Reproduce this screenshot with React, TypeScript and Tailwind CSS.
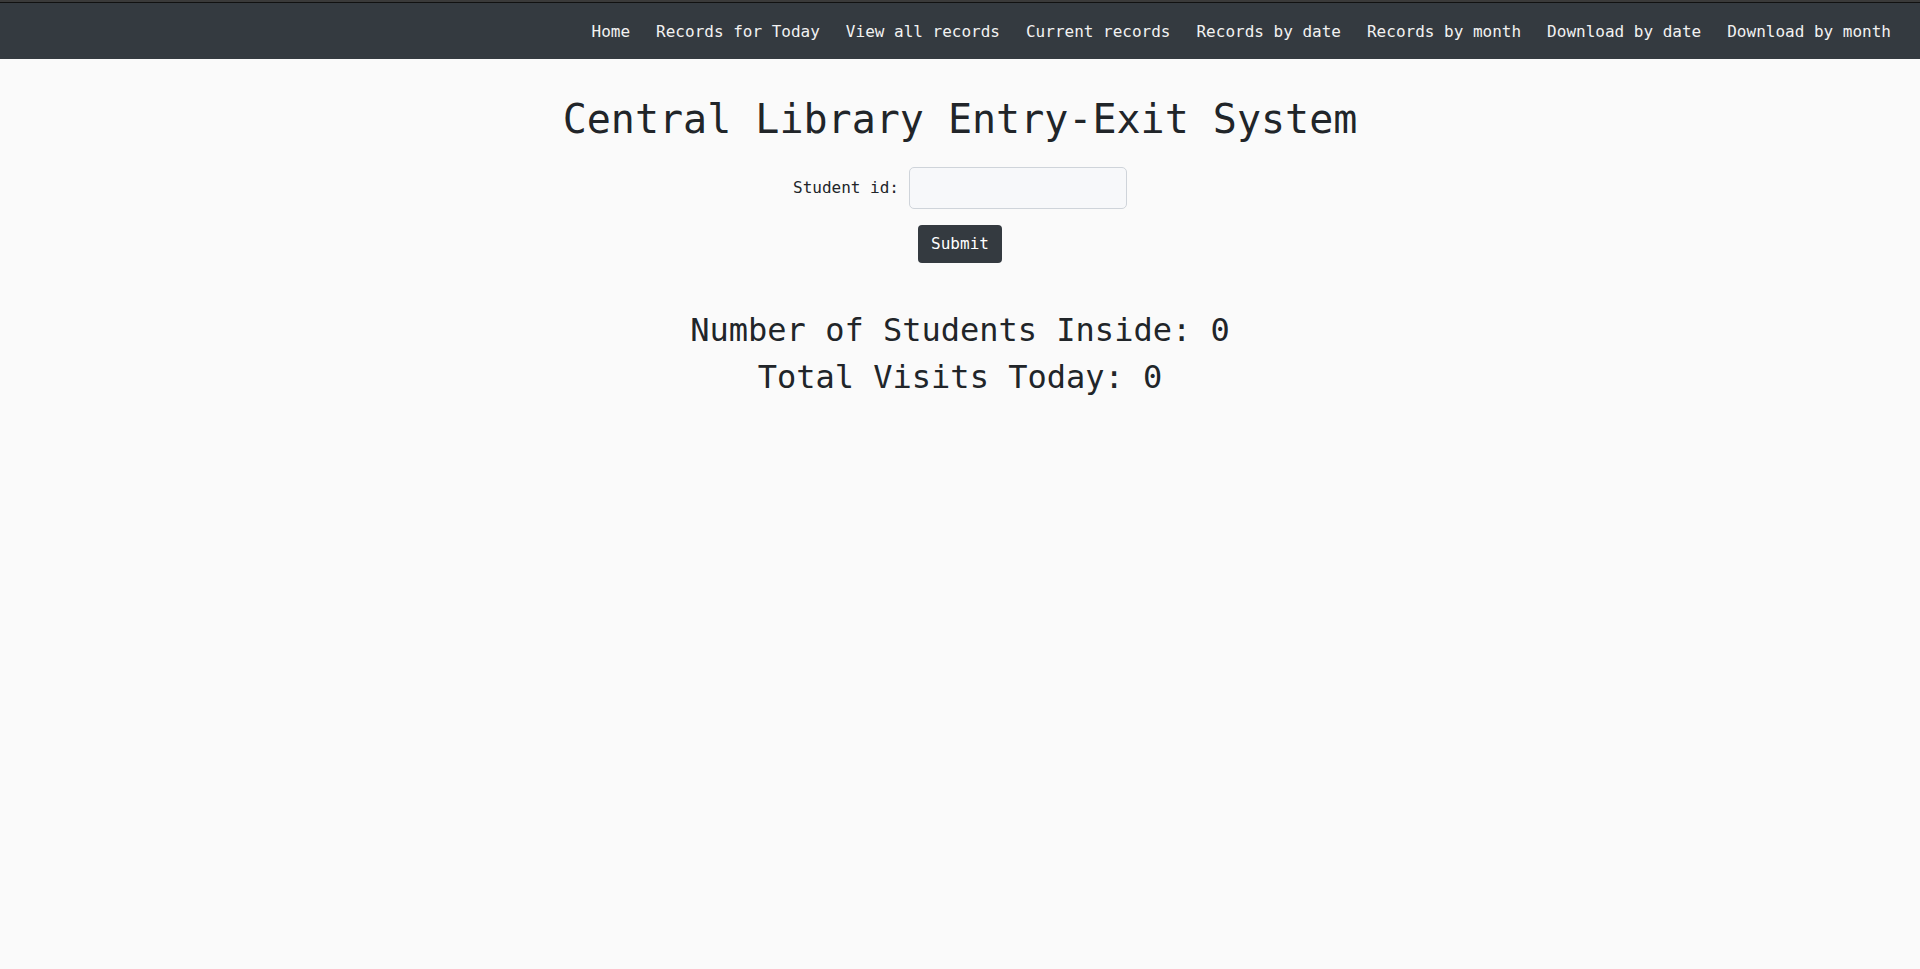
const links = [
  'Home',
  'Records for Today',
  'View all records',
  'Current records',
  'Records by date',
  'Records by month',
  'Download by date',
  'Download by month',
]

export default function App() {
  return (
    <div className="min-h-screen bg-[#fafafa] text-[#212529] font-['DejaVu_Sans_Mono',monospace]">
      <header className="bg-[#3a3a3a] pt-[2px]">
        <nav className="h-[57px] border-t border-[#111] bg-[#343a40] flex items-center justify-end gap-[26px] pr-[29px] pt-[2px]">
          {links.map((l) => (
            <a key={l} href="#" className="text-[16px] leading-6 text-[#f2f2f2] whitespace-pre">
              {l}
            </a>
          ))}
        </nav>
      </header>

      <main className="flex flex-col items-center pt-[36px]">
        <h1 className="text-[40px] leading-[1.2] font-normal mb-[24px]">Central Library Entry-Exit System</h1>

        <form className="flex flex-col items-center" onSubmit={(e) => e.preventDefault()}>
          <div className="flex items-center gap-[10px]">
            <label htmlFor="sid" className="text-[16px] leading-6">Student id:</label>
            <input
              id="sid"
              type="text"
              className="w-[218px] h-[42px] rounded-[5px] border border-[#cfd4da] bg-[#f7f8fa] px-3 text-[16px] focus:outline-none"
            />
          </div>
          <button
            type="submit"
            className="mt-[16px] h-[38px] w-[84px] rounded-[4px] bg-[#343a40] text-[16px] text-white leading-6"
          >
            Submit
          </button>
        </form>

        <div className="mt-[48px] flex flex-col items-center">
          <h2 className="text-[32px] leading-[1.2] font-normal mb-[9px]">Number of Students Inside: 0</h2>
          <h2 className="text-[32px] leading-[1.2] font-normal mb-[9px]">Total Visits Today: 0</h2>
        </div>
      </main>
    </div>
  )
}
